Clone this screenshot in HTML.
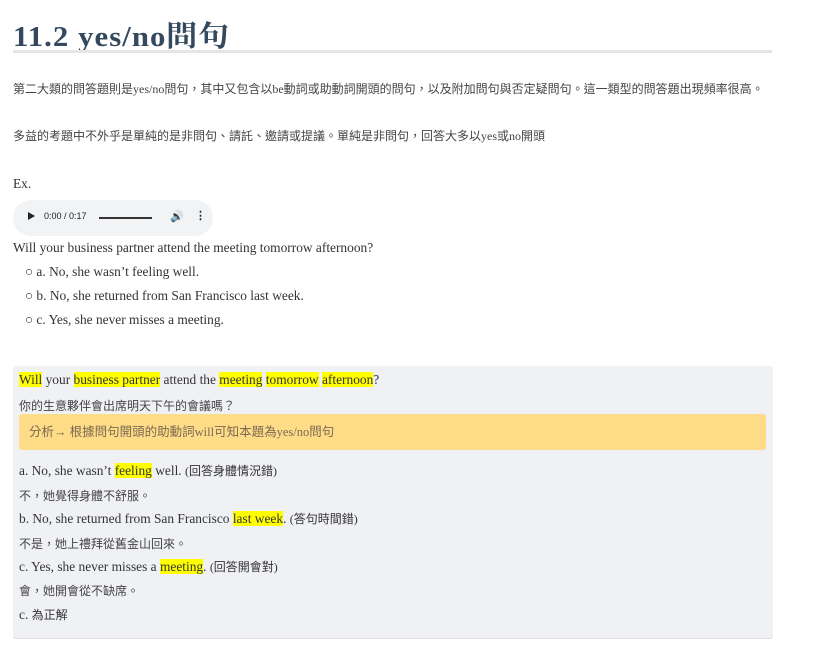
<!DOCTYPE html>
<html><head><meta charset="utf-8"><style>
body{margin:0;background:#fff;font-family:"Liberation Serif","Noto Sans CJK TC",serif;color:#34495e;width:827px;height:662px;overflow:hidden;position:relative}
.a{position:absolute;left:13px;white-space:nowrap}
h1{position:absolute;left:13px;top:14px;margin:0;font-size:29px;font-weight:bold;color:#34495e;font-family:"Liberation Serif","Noto Serif CJK SC",serif;letter-spacing:1px;transform:scaleX(1.06);transform-origin:left}
.hr{position:absolute;left:13px;top:50px;width:759px;height:3px;background:#e5e5e5}
.cj{font-size:12px;color:#444}
.t{font-size:13.4px;color:#333}
.t .c{font-size:12px}
.audio{position:absolute;left:13px;top:200px;width:200px;height:36px;background:#f1f3f4;border-radius:18px;font-family:"Liberation Sans",sans-serif;font-size:9px;color:#222}
.box{position:absolute;left:13px;top:366px;width:760px;height:272px;background:#f0f1f5;border-bottom:1px solid #ddd;border-radius:3px}
.y{background:#ffff00}
.note{position:absolute;left:6px;top:48px;width:747px;height:36px;background:#ffdc87;border-radius:3px;font-size:12.5px;color:#7a6a50;line-height:36px;padding-left:10px;box-sizing:border-box}
.box .a{left:6px}
</style></head><body>
<h1>11.2 yes/no問句</h1>
<div class="hr"></div>
<div class="a cj" style="top:80px">第二大類的問答題則是yes/no問句，其中又包含以be動詞或助動詞開頭的問句，以及附加問句與否定疑問句。這一類型的問答題出現頻率很高。</div>
<div class="a cj" style="top:127px">多益的考題中不外乎是單純的是非問句、請託、邀請或提議。單純是非問句，回答大多以yes或no開頭</div>
<div class="a t" style="top:176px">Ex.</div>
<div class="audio">
<span style="position:absolute;left:15px;top:12px;width:0;height:0;border-left:7px solid #222;border-top:4.5px solid transparent;border-bottom:4.5px solid transparent"></span>
<span style="position:absolute;left:31px;top:11px">0:00 / 0:17</span>
<span style="position:absolute;left:86px;top:17px;width:53px;height:2px;background:#333"></span>
<span style="position:absolute;left:157px;top:10px;font-size:11px">🔊</span>
<span style="position:absolute;left:182px;top:9px;font-size:11px;font-weight:bold">⋮</span>
</div>
<div class="a t" style="top:240px">Will your business partner attend the meeting tomorrow afternoon?</div>
<div class="a t" style="top:264px;left:25px">○ a. No, she wasn’t feeling well.</div>
<div class="a t" style="top:288px;left:25px">○ b. No, she returned from San Francisco last week.</div>
<div class="a t" style="top:312px;left:25px">○ c. Yes, she never misses a meeting.</div>
<div class="box">
<div class="a t" style="top:6px"><span class="y">Will</span> your <span class="y">business partner</span> attend the <span class="y">meeting</span> <span class="y">tomorrow</span> <span class="y">afternoon</span>?</div>
<div class="a cj" style="top:31px">你的生意夥伴會出席明天下午的會議嗎？</div>
<div class="note">分析→ 根據問句開頭的助動詞will可知本題為yes/no問句</div>
<div class="a t" style="top:96px">a. No, she wasn’t <span class="y">feeling</span> well. <span class="c">(回答身體情況錯)</span></div>
<div class="a cj" style="top:121px">不，她覺得身體不舒服。</div>
<div class="a t" style="top:144px">b. No, she returned from San Francisco <span class="y">last week</span>. <span class="c">(答句時間錯)</span></div>
<div class="a cj" style="top:169px">不是，她上禮拜從舊金山回來。</div>
<div class="a t" style="top:192px">c. Yes, she never misses a <span class="y">meeting</span>. <span class="c">(回答開會對)</span></div>
<div class="a cj" style="top:216px">會，她開會從不缺席。</div>
<div class="a t" style="top:240px">c. <span class="c">為正解</span></div>
</div>
</body></html>
